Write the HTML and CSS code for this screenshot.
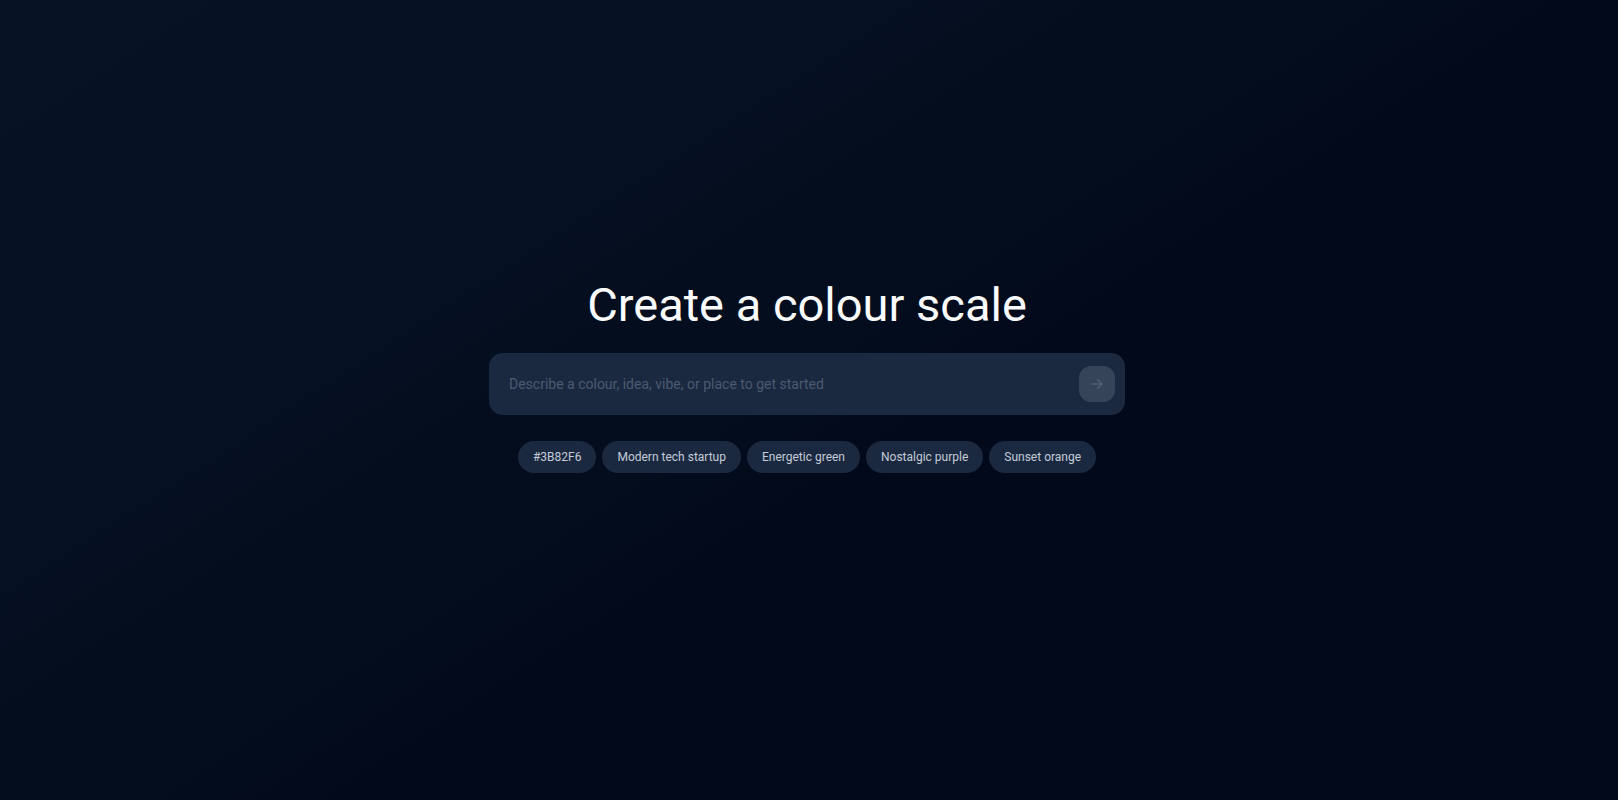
FILE: index.html
```html
<!DOCTYPE html>
<html lang="en-GB">
<head>
<meta charset="utf-8">
<meta name="viewport" content="width=device-width, initial-scale=1">
<title>Create a colour scale</title>
<link rel="stylesheet" href="styles.css">
</head>
<body>
<main class="page">
  <div class="creator">
    <h1 class="title">Create a colour scale</h1>
    <form class="prompt">
      <input class="prompt-input" type="text" aria-label="Colour description" placeholder="Describe a colour, idea, vibe, or place to get started">
      <button class="submit" type="submit" aria-label="Create">
        <svg class="arrow" viewBox="0 0 16 16" aria-hidden="true"><path d="M3 8h10M8.500 3.500 13 8l-4.500 4.500"/></svg>
      </button>
    </form>
    <div class="suggestions">
      <button class="chip" type="button">#3B82F6</button>
      <button class="chip" type="button">Modern tech startup</button>
      <button class="chip" type="button">Energetic green</button>
      <button class="chip" type="button">Nostalgic purple</button>
      <button class="chip" type="button">Sunset orange</button>
    </div>
  </div>
</main>
</body>
</html>
```

FILE: styles.css
```css
* { box-sizing: border-box; }

body {
  margin: 0;
  font-family: Roboto, "Liberation Sans", sans-serif;
  background: #02091b;
}

.page {
  min-height: 100vh;
  display: flex;
  align-items: center;
  justify-content: center;
  padding: 0 20px 50px 16px;
  background: linear-gradient(147deg, #071225 0%, #051023 16%, #051022 32%, #030d1e 40%, #030d1e 48%, #02091b 55%);
}

.creator {
  width: 100%;
  max-width: 636px;
  display: flex;
  flex-direction: column;
  align-items: center;
}

.title {
  margin: 0 0 20px;
  font-size: 47px;
  font-weight: 400;
  line-height: 56px;
  text-align: center;
  color: #f8fafc;
}

.prompt {
  width: 100%;
  display: flex;
  align-items: center;
  gap: 12px;
  padding: 13px 10px 13px 20px;
  border-radius: 14px;
  background: #1b2940;
}

.prompt-input {
  flex: 1;
  min-width: 0;
  height: 36px;
  padding: 0;
  border: 0;
  outline: 0;
  background: transparent;
  color: #f8fafc;
  font: 400 14px/20px Roboto, "Liberation Sans", sans-serif;
}

.prompt-input::placeholder { color: #4b5a70; opacity: 1; }

.submit {
  width: 36px;
  height: 36px;
  display: grid;
  place-items: center;
  padding: 0;
  border: 0;
  border-radius: 12px;
  background: #364459;
}

.arrow {
  width: 16px;
  height: 16px;
  fill: none;
  stroke: #4f5d73;
  stroke-width: 1.5;
  stroke-linecap: round;
  stroke-linejoin: round;
}

.suggestions {
  display: flex;
  flex-wrap: wrap;
  justify-content: center;
  gap: 6px;
  margin-top: 26px;
}

.chip {
  height: 32px;
  padding: 0 15px;
  border: 0;
  border-radius: 16px;
  background: #1b2940;
  color: #c3ccd8;
  font: 400 12px/16px Roboto, "Liberation Sans", sans-serif;
  white-space: nowrap;
}
```
